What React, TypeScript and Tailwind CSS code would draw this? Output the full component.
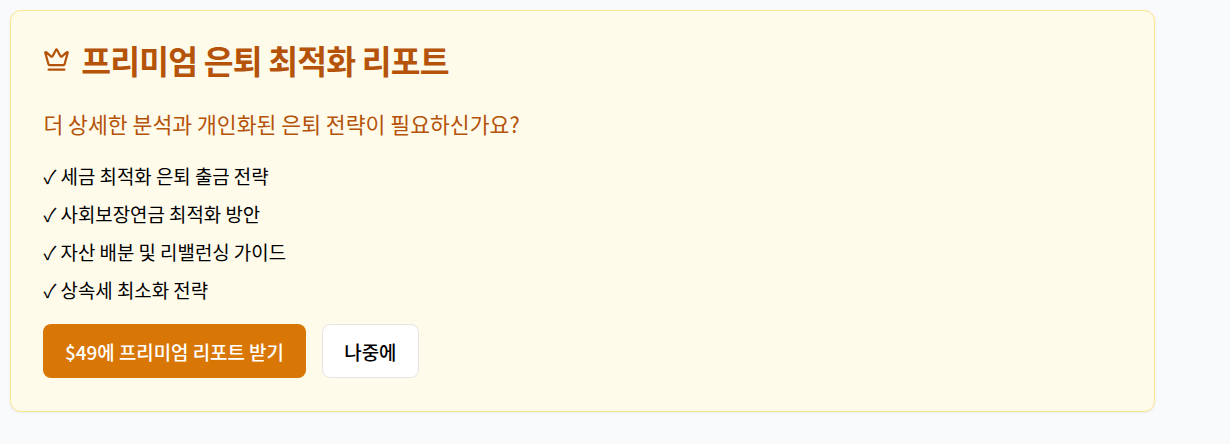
import React from "react";
import { Crown } from "lucide-react";

const benefits: string[] = [
  "세금 최적화 은퇴 출금 전략",
  "사회보장연금 최적화 방안",
  "자산 배분 및 리밸런싱 가이드",
  "상속세 최소화 전략",
];

export default function App() {
  return (
    <div className="min-h-screen bg-slate-50 pt-[10px] pl-[10px] font-['Noto_Sans_CJK_KR',sans-serif]">
      <section className="h-[402px] w-[1145px] rounded-[10.8px] border border-[#fde68a] bg-[#fffbeb] px-[32.4px] shadow-[0_1px_3px_0_rgb(0_0_0/0.06)]">
        <h2 className="mt-[28px] flex h-[42px] items-center gap-[10.8px] text-[32.4px] leading-[42px] font-bold tracking-[-0.81px] text-[#b45309]">
          <Crown className="mt-[-1px] size-[27px]" strokeWidth={2} />
          <span>프리미엄 은퇴 최적화 리포트</span>
        </h2>
        <p className="mt-[27px] text-[21.6px] leading-[32px] text-[#b45309]">
          더 상세한 분석과 개인화된 은퇴 전략이 필요하신가요?
        </p>
        <ul className="mt-[22px] flex flex-col gap-[10px] text-[18.9px] leading-[28px] text-black">
          {benefits.map((b) => (
            <li key={b}>✓ {b}</li>
          ))}
        </ul>
        <div className="mt-[20px] flex gap-4 text-[18.9px] leading-[27px] font-medium">
          <button className="h-[54px] w-[263px] rounded-[8.1px] bg-[#d97706] pr-px text-white">$49에 프리미엄 리포트 받기</button>
          <button className="h-[54px] w-[97px] rounded-[8.1px] border border-[#e4e4e7] bg-white pr-px text-black">나중에</button>
        </div>
      </section>
    </div>
  );
}
